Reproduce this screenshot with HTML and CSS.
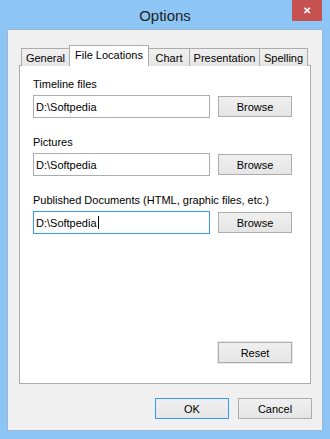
FILE: index.html
```html
<!DOCTYPE html>
<html lang="en">
<head>
  <meta charset="UTF-8" />
  <title>Options</title>
  <link rel="stylesheet" href="styles.css">
</head>
<body>
  <div class="window">
    <div class="titlebar">
      <span class="title">Options</span>
      <div class="close">&#x2715;</div>
    </div>
    <div class="client">
      <div class="tabs">
        <div class="tab tab-general">General</div>
        <div class="tab tab-files active">File Locations</div>
        <div class="tab tab-chart">Chart</div>
        <div class="tab tab-pres">Presentation</div>
        <div class="tab tab-spell">Spelling</div>
      </div>
      <div class="panel">
        <div class="row">
          <div class="label">Timeline files</div>
          <div class="line">
            <div class="field">D:\Softpedia</div>
            <button class="btn">Browse</button>
          </div>
        </div>
        <div class="row">
          <div class="label">Pictures</div>
          <div class="line">
            <div class="field">D:\Softpedia</div>
            <button class="btn">Browse</button>
          </div>
        </div>
        <div class="row">
          <div class="label">Published Documents (HTML, graphic files, etc.)</div>
          <div class="line">
            <div class="field focus">D:\Softpedia<span class="caret"></span></div>
            <button class="btn">Browse</button>
          </div>
        </div>
        <div class="panel-foot">
          <button class="btn reset">Reset</button>
        </div>
      </div>
      <div class="footer">
        <button class="btn default">OK</button>
        <button class="btn">Cancel</button>
      </div>
    </div>
  </div>
</body>
</html>
```

FILE: styles.css
```css
body {
  margin: 0;
  font-family: "Liberation Sans", Arial, sans-serif;
  font-size: 11px;
  color: #000;
}
.window {
  width: 330px;
  height: 439px;
  background: #8cc5f6;
  display: flex;
  flex-direction: column;
}
.titlebar {
  height: 29px;
  display: flex;
  justify-content: center;
  align-items: center;
  position: relative;
}
.title {
  font-size: 15px;
  color: #222;
  margin-top: 1px;
}
.close {
  position: absolute;
  top: 0;
  right: 8px;
  width: 30px;
  height: 21px;
  background: #c75050;
  color: white;
  font-size: 10px;
  font-weight: bold;
  display: flex;
  justify-content: center;
  align-items: center;
}
.client {
  margin: 0 7px 8px 7px;
  flex: 1;
  border: 1px solid #9fb6cc;
  background: #f0f0f0;
  padding: 16px 0 0 11px;
  display: flex;
  flex-direction: column;
}
.tabs {
  display: flex;
  align-items: flex-end;
  height: 20px;
  padding-left: 2px;
  position: relative;
  z-index: 1;
  margin-bottom: -1px;
}
.tab {
  height: 18px;
  box-sizing: border-box;
  border: 1px solid #acacac;
  border-bottom: none;
  background: linear-gradient(#f0f0f0, #e5e5e5);
  margin-left: -1px;
  display: flex;
  justify-content: center;
  align-items: center;
  padding-top: 1px;
}
.tab:first-child {
  margin-left: 0;
}
.tab.active {
  height: 21px;
  background: white;
  padding-top: 0;
  padding-bottom: 2px;
}
.tab-general { width: 49px; }
.tab-files { width: 80px; }
.tab-chart { width: 42px; }
.tab-pres { width: 71px; }
.tab-spell { width: 49px; }
.panel {
  width: 292px;
  height: 319px;
  box-sizing: border-box;
  border: 1px solid #acacac;
  background: white;
  padding: 11px 0 20px 13px;
  display: flex;
  flex-direction: column;
}
.row {
  margin-bottom: 17px;
}
.label {
  height: 15px;
  line-height: 15px;
  margin-bottom: 3px;
}
.line {
  display: flex;
  align-items: center;
  gap: 8px;
}
.field {
  width: 177px;
  height: 23px;
  box-sizing: border-box;
  border: 1px solid #abadb3;
  padding: 0 0 0 2px;
  font-size: 11px;
  display: flex;
  align-items: center;
}
.field.focus {
  border-color: #3399ff;
}
.caret {
  display: inline-block;
  width: 1px;
  height: 13px;
  background: #000;
  margin-left: 1px;
}
.btn {
  width: 74px;
  height: 21px;
  box-sizing: border-box;
  border: 1px solid #acacac;
  background: linear-gradient(#f0f0f0, #e5e5e5);
  font-family: "Liberation Sans", Arial, sans-serif;
  font-size: 11px;
  color: #000;
  padding: 0;
}
.btn.default {
  border-color: #3399ff;
}
.panel-foot {
  margin-top: auto;
  padding-left: 185px;
}
.reset {
  box-shadow: 0 0 0 1px #e8e8e8;
}
.footer {
  display: flex;
  gap: 9px;
  padding-left: 136px;
  margin-top: 14px;
}
```
